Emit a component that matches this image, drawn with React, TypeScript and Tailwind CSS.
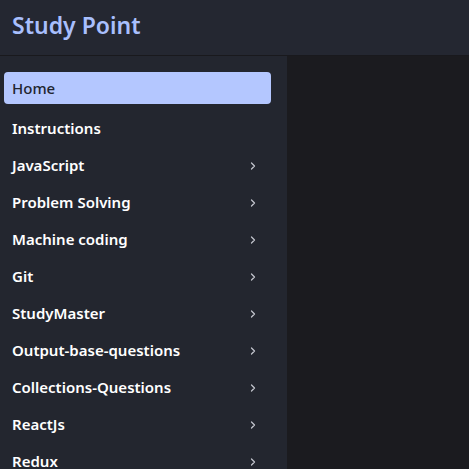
import { ChevronRight } from "lucide-react";

const links = [
  { label: "Instructions", nested: false },
  { label: "JavaScript", nested: true },
  { label: "Problem Solving", nested: true },
  { label: "Machine coding", nested: true },
  { label: "Git", nested: true },
  { label: "StudyMaster", nested: true },
  { label: "Output-base-questions", nested: true },
  { label: "Collections-Questions", nested: true },
  { label: "ReactJs", nested: true },
  { label: "Redux", nested: true },
];

export default function App() {
  return (
    <div
      className="h-[469px] w-[469px] overflow-hidden flex flex-col bg-[#1b1b1f]"
      style={{ fontFamily: '"Noto Sans", "Open Sans", sans-serif' }}
    >
      {/* Top bar */}
      <header className="h-[56px] shrink-0 flex items-center px-3 bg-[#242731] border-b border-[#19191d]">
        <h1 className="text-[23px] font-semibold text-[#a8bffd] -mt-[5px]">
          Study Point
        </h1>
      </header>

      <div className="flex flex-1 min-h-0">
        {/* Side navigation */}
        <nav className="w-[287px] shrink-0 bg-[#23262f] pt-4 pl-1 pr-4 overflow-hidden">
          <a className="flex items-center h-8 mb-[6px] px-2 rounded-[4px] bg-[#b4c7ff] text-[15px] font-medium text-[#22252f]">
            Home
          </a>
          <ul>
            {links.map((link) => (
              <li
                key={link.label}
                className="flex items-center justify-between h-[37px] pl-2 pr-3 text-[15px] font-semibold text-white"
              >
                <span>{link.label}</span>
                {link.nested && (
                  <ChevronRight size={12} strokeWidth={2.5} className="text-[#c2c5cd]" />
                )}
              </li>
            ))}
          </ul>
        </nav>

        {/* Content area */}
        <main className="flex-1 bg-[#1b1b1f]" />
      </div>
    </div>
  );
}
